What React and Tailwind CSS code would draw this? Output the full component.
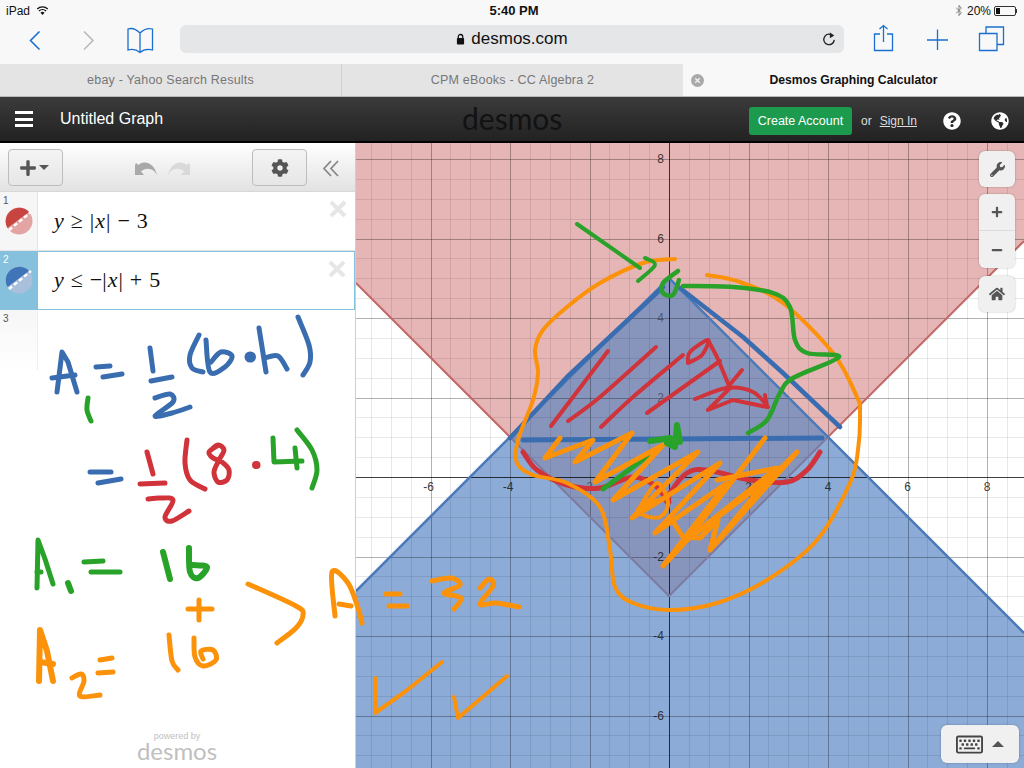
import { FaCog, FaGlobeAmericas, FaHome, FaPlus, FaMinus, FaQuestionCircle, FaRegKeyboard, FaWrench } from "react-icons/fa";

const SANS = "font-['Liberation_Sans',Arial,sans-serif]";

// graph window: origin and pixels per unit
const OX = 669;
const OY = 477;
const UNIT = 39.75;
const px = x => OX + x * UNIT;
const py = y => OY - y * UNIT;
const crisp = v => Math.round(v) + 0.5;

const range = (from, to) => {
  const out = [];
  for (let i = from; i <= to; i++) out.push(i);
  return out;
};

const gridOpacity = i => (i === 0 ? 0.75 : i % 4 === 0 ? 0.3 : 0.09);

function Graph() {
  const xs = range(-16, 18);
  const ys = range(-15, 17);
  return (
    <svg viewBox="356 143 668 625" className="block w-full h-full">
      <rect x="356" y="143" width="668" height="625" fill="#ffffff" />
      {/* shaded regions */}
      <polygon points="356,143 1024,143 1024,241 669,596 356,283" fill="#e6b6b6" />
      <polygon points="669,278 1024,633 1024,768 356,768 356,591" fill="#8cabd7" />
      <polygon points="669,278 828,437 669,596 510,437" fill="#8795bc" />
      {/* grid */}
      {xs.map(i => (
        <line key={`x${i}`} x1={crisp(px(i / 2))} x2={crisp(px(i / 2))} y1="143" y2="768" stroke="#000" strokeOpacity={gridOpacity(i)} strokeWidth="1" />
      ))}
      {ys.map(i => (
        <line key={`y${i}`} y1={crisp(py(i / 2))} y2={crisp(py(i / 2))} x1="356" x2="1024" stroke="#000" strokeOpacity={gridOpacity(i)} strokeWidth="1" />
      ))}
      {/* boundaries; the red one turns grey where it crosses the blue region */}
      <polyline points="356,283 510,437" fill="none" stroke="#c26866" strokeWidth="2" />
      <polyline points="828,437 1024,241" fill="none" stroke="#c26866" strokeWidth="2" />
      <polyline points="510,437 669,596 828,437" fill="none" stroke="#7d7ba0" strokeWidth="2" />
      <polyline points="356,591 669,278 1024,633" fill="none" stroke="#4a7ab8" strokeWidth="2.5" />
      {/* axis numbers */}
      <g fontFamily="'Liberation Sans', Arial, sans-serif" fontSize="12" fill="#222">
        {[-6, -4, -2, 2, 4, 6, 8].map(n => (
          <text key={n} x={px(n) - (n < 0 ? 2 : 0)} y={OY + 14} textAnchor="middle" fillOpacity={n === -2 ? 0.5 : 0.9}>
            {n}
          </text>
        ))}
        {[8, 6, 4, 2, -2, -4, -6].map(n => (
          <text key={n} x={OX - 5} y={py(n) + 4} textAnchor="end" fillOpacity={n === 4 || n === 2 ? 0.55 : 0.9}>
            {n}
          </text>
        ))}
      </g>
    </svg>
  );
}

const BLUE = "#3a6db0";
const RED = "#d1333a";
const GREEN = "#28a228";
const ORANGE = "#fb9209";

// handwriting on top of the page: [colour, width, points, smooth?]
const strokes = [
  // A1 = 1/2 (b.h)
  [BLUE, 5, [[57, 392], [62, 352], [68, 362], [77, 392]]],
  [BLUE, 5, [[52, 378], [75, 375]]],
  [BLUE, 5, [[96, 367], [110, 366]]],
  [BLUE, 5, [[103, 377], [122, 374]]],
  [BLUE, 5, [[150, 348], [153, 371]]],
  [BLUE, 5, [[151, 381], [172, 377]]],
  [BLUE, 5, [[155, 398], [170, 394], [173, 402], [155, 416], [172, 413], [190, 407]], true],
  [BLUE, 5, [[199, 335], [190, 355], [192, 368], [203, 372]], true],
  [BLUE, 5, [[206, 340], [210, 372], [225, 367], [232, 356], [221, 352], [211, 362]], true],
  [BLUE, 11, [[250, 357], [250.5, 357]]],
  [BLUE, 5, [[259, 328], [266, 372]]],
  [BLUE, 5, [[265, 358], [278, 356], [287, 369]], true],
  [BLUE, 5, [[298, 317], [309, 345], [310, 362], [303, 375]], true],
  [GREEN, 5, [[88, 398], [87, 410], [91, 421]], true],
  // = 1/2 (8.4)
  [BLUE, 5, [[90, 472], [111, 472]]],
  [BLUE, 5, [[98, 483], [121, 479]]],
  [RED, 5, [[147, 452], [153, 474]]],
  [RED, 5, [[140, 484], [165, 483]]],
  [RED, 5, [[148, 499], [160, 498], [173, 500], [165, 517], [172, 521], [189, 511]], true],
  [RED, 5, [[187, 440], [185, 463], [190, 480], [205, 489]], true],
  [RED, 5, [[217, 446], [209, 452], [213, 458], [222, 462], [229, 470], [227, 480], [218, 482], [214, 472], [219, 460], [224, 450], [218, 445], [211, 450]], true],
  [RED, 8, [[256, 465], [256.5, 465]]],
  [GREEN, 5, [[273, 438], [274, 462], [302, 461]]],
  [GREEN, 5, [[295, 448], [297, 468]]],
  [GREEN, 5, [[297, 430], [312, 450], [317, 470], [312, 488]], true],
  // A1 = 16
  [GREEN, 5, [[37, 588], [38, 540], [45, 559], [53, 584]]],
  [GREEN, 5, [[37, 572], [41, 572]]],
  [GREEN, 6, [[68, 583], [71, 591]]],
  [GREEN, 5, [[84, 562], [103, 561]]],
  [GREEN, 5, [[91, 572], [120, 572]]],
  [GREEN, 6, [[163, 552], [170, 579]]],
  [GREEN, 6, [[189, 548], [190, 572], [198, 578], [207, 567], [193, 565]], true],
  // + / A2 = 16
  [ORANGE, 5, [[188, 609], [212, 609]]],
  [ORANGE, 5, [[199, 600], [199, 620]]],
  [ORANGE, 6, [[39, 681], [40, 630], [47, 651], [53, 681]]],
  [ORANGE, 6, [[40, 662], [53, 664]]],
  [ORANGE, 5, [[72, 678], [81, 674], [84, 681], [80, 696], [100, 695]], true],
  [ORANGE, 5, [[98, 673], [113, 672]]],
  [ORANGE, 5, [[100, 660], [112, 658]]],
  [ORANGE, 5, [[169, 635], [172, 661], [178, 670]], true],
  [ORANGE, 5, [[194, 638], [195, 657], [203, 666], [216, 660], [213, 650], [201, 651], [203, 659]], true],
  // brace and A = 32
  [ORANGE, 5, [[248, 584], [296, 606], [303, 615], [296, 628], [277, 643]], true],
  [ORANGE, 5, [[335, 616], [332, 572], [348, 583], [358, 608], [362, 623]], true],
  [ORANGE, 5, [[339, 604], [351, 606]]],
  [ORANGE, 5, [[386, 594], [400, 594]]],
  [ORANGE, 5, [[389, 606], [407, 606]]],
  [ORANGE, 5, [[432, 581], [451, 578], [460, 585], [444, 593], [461, 598], [454, 609]], true],
  [ORANGE, 5, [[480, 588], [489, 579], [493, 586], [480, 604], [496, 603], [519, 607]], true],
  // checks
  [ORANGE, 4, [[375, 678], [375, 713], [406, 691], [442, 662]]],
  [ORANGE, 4, [[454, 697], [458, 718], [507, 676]]],
  // tracing the triangle edges
  [BLUE, 4.5, [[510, 438], [567, 377], [663, 287]]],
  [BLUE, 4.5, [[680, 288], [743, 337], [783, 373], [840, 427]]],
  [BLUE, 5, [[523, 440], [667, 439], [822, 438]]],
  // shading, upper triangle
  [RED, 4, [[608, 351], [551, 426]]],
  [RED, 4, [[656, 347], [600, 397], [568, 421]], true],
  [RED, 4, [[683, 355], [633, 397], [601, 427]], true],
  [RED, 4, [[647, 413], [720, 361]]],
  [RED, 4, [[688, 363], [690, 352], [708, 340], [702, 355], [688, 363]], true],
  [RED, 4, [[708, 340], [717, 357], [730, 388], [708, 410], [733, 400], [767, 407], [765, 395]]],
  [RED, 4, [[695, 399], [727, 388], [753, 392], [768, 407]], true],
  [RED, 4, [[727, 388], [742, 370]]],
  // lower curve
  [RED, 5, [[523, 452], [537, 470], [567, 485], [600, 488], [633, 477], [657, 487], [668, 503], [670, 493], [687, 473], [707, 470], [750, 480], [787, 482], [807, 470], [820, 452]], true],
  // scribble, lower triangle
  [GREEN, 5, [[603, 489], [660, 447]]],
  [ORANGE, 5, [[560, 438], [545, 458], [593, 440], [575, 462], [632, 433], [595, 482], [663, 445], [613, 500], [698, 452], [632, 518], [720, 463], [655, 533], [727, 483], [663, 566], [687, 540], [765, 438]]],
  [ORANGE, 5, [[717, 480], [777, 468], [687, 540], [767, 480], [710, 550], [797, 452], [767, 482], [710, 550], [718, 520], [700, 538], [683, 537], [670, 517]]],
  [ORANGE, 4, [[640, 507], [657, 483], [668, 503], [660, 517], [643, 515], [640, 507], [668, 497]], true],
  // big outline
  [ORANGE, 4, [[675, 259], [643, 263], [600, 283], [567, 307], [543, 330], [535, 350], [538, 373], [533, 400], [518, 440], [517, 463], [533, 475], [567, 483], [600, 507], [610, 550], [615, 587], [633, 603], [670, 610], [717, 603], [767, 580], [817, 540], [850, 483], [858, 450], [860, 413], [857, 397], [833, 353], [783, 303], [740, 282], [707, 275]], true],
  // arrows and markers
  [GREEN, 4, [[577, 224], [640, 268]]],
  [GREEN, 4, [[645, 258], [655, 265], [638, 281]], true],
  [GREEN, 4.5, [[678, 271], [663, 283], [663, 293], [673, 295], [679, 280]], true],
  [GREEN, 4.5, [[683, 286], [733, 287], [773, 293], [790, 307], [795, 340], [807, 353], [839, 357], [793, 378], [780, 393], [767, 420], [748, 433]], true],
  [GREEN, 6, [[650, 441], [670, 438], [680, 442], [677, 425], [675, 447], [667, 443]]],
];

// Catmull-Rom through the points, so the pen lines stay round
const smoothPath = pts => {
  let d = `M${pts[0][0]},${pts[0][1]}`;
  for (let i = 0; i < pts.length - 1; i++) {
    const p0 = pts[i - 1] || pts[i];
    const p1 = pts[i];
    const p2 = pts[i + 1];
    const p3 = pts[i + 2] || p2;
    const c1 = [p1[0] + (p2[0] - p0[0]) / 6, p1[1] + (p2[1] - p0[1]) / 6];
    const c2 = [p2[0] - (p3[0] - p1[0]) / 6, p2[1] - (p3[1] - p1[1]) / 6];
    d += ` C${c1[0]},${c1[1]} ${c2[0]},${c2[1]} ${p2[0]},${p2[1]}`;
  }
  return d;
};

const linePath = pts => "M" + pts.map(p => p.join(",")).join(" L");

function Ink() {
  return (
    <svg viewBox="0 0 1024 768" className="absolute inset-0 w-[1024px] h-[768px] pointer-events-none">
      {strokes.map(([color, width, pts, smooth], i) => (
        <path
          key={i}
          d={smooth ? smoothPath(pts) : linePath(pts)}
          fill="none"
          stroke={color}
          strokeWidth={width}
          strokeLinecap="round"
          strokeLinejoin="round"
        />
      ))}
    </svg>
  );
}

function ExprIcon({ dark, light }) {
  return (
    <svg viewBox="0 0 28 28" className="w-7 h-7">
      <circle cx="14" cy="14" r="13.5" fill={light} />
      <path d="M2.5 21 A13.5 13.5 0 0 1 24 5 Z" fill={dark} />
      <line x1="4" y1="23" x2="26" y2="5" stroke="#fff" strokeWidth="2.5" strokeDasharray="4 2.5" />
    </svg>
  );
}

function Expression({ n, active, dark, light, children }) {
  return (
    <div className={`flex h-[59px] ${active ? "border border-[#85c1dc] bg-white" : "border-b border-[#e4e4e4] bg-white"}`}>
      <div className={`relative w-[38px] shrink-0 ${active ? "bg-[#85c1dc] -my-px -ml-px" : "bg-[#f6f6f6] border-r border-[#e4e4e4]"}`}>
        <span className={`absolute left-[3px] top-[3px] text-[10px] leading-3 ${active ? "text-white" : "text-[#555]"}`}>{n}</span>
        <span className="absolute left-[5px] top-[15px] flex">
          <ExprIcon dark={dark} light={light} />
        </span>
      </div>
      <div className="flex-1 flex items-center pl-4 pb-[2px] font-['Liberation_Serif',serif] text-[22px] text-[#111] whitespace-pre [word-spacing:1.5px]">
        {children}
      </div>
      <div className="relative w-[28px]">
        <svg viewBox="0 0 18 18" className="absolute right-[8px] top-[8px] w-[18px] h-[18px]">
          <path d="M2 2 L16 16 M16 2 L2 16" stroke="#e6e6e6" strokeWidth="4" />
        </svg>
      </div>
    </div>
  );
}

function BrowserChrome() {
  return (
    <div className={`${SANS} bg-[#f8f8f8] shrink-0`}>
      {/* status bar */}
      <div className="h-[21px] grid grid-cols-[1fr_auto_1fr] items-center px-[6px] text-[12px] text-[#111]">
        <div className="flex items-center gap-[6px]">
          <span>iPad</span>
          <svg viewBox="0 0 16 12" className="w-[13px] h-[10px]">
            <path d="M8 11 L5.5 8 A4 4 0 0 1 10.5 8 Z" fill="#111" />
            <path d="M3.6 6 A6.5 6.5 0 0 1 12.4 6 M1.5 3.6 A9.5 9.5 0 0 1 14.5 3.6" fill="none" stroke="#111" strokeWidth="1.6" />
          </svg>
        </div>
        <span className="ml-[4px] text-[13px] font-bold">5:40 PM</span>
        <div className="flex items-center justify-end gap-[6px] pr-[1px]">
          <svg viewBox="0 0 8 14" className="w-[8px] h-[13px]">
            <path d="M1 4 L6.5 9.5 L4 12.5 L4 1.5 L6.5 4.5 L1 10" fill="none" stroke="#777" strokeWidth="1" />
          </svg>
          <span className="-ml-[2px]">20%</span>
          <div className="-ml-[3px] flex items-center">
            <div className="w-[22px] h-[10px] border border-[#333] rounded-[2px] p-px">
              <div className="w-[4px] h-full bg-[#111]" />
            </div>
            <div className="w-px h-[4px] bg-[#333]" />
          </div>
        </div>
      </div>
      {/* toolbar */}
      <div className="relative h-[43px]">
        <svg viewBox="0 0 1024 43" className="absolute inset-0 w-full h-full" fill="none" strokeWidth="1.3">
          <path d="M39.5 10.5 L30.5 19.5 L39.5 28.5" stroke="#1a6fd0" strokeWidth="1.6" />
          <path d="M84 10.5 L93 19.5 L84 28.5" stroke="#b9b9bb" strokeWidth="1.6" />
          <path d="M140 12 C135 7 131 7 128 8 L128 29 C131 28 136 28 140 31.5 C144 28 149 28 152.5 29 L152.5 8 C149 7 145 7 140 12 Z M140 12 L140 31" stroke="#1a6fd0" />
          <path d="M880 13 L874.5 13 L874.5 29.5 L892.5 29.5 L892.5 13 L887 13 M883.5 21 L883.5 4.5 M879.5 8 L883.5 4.5 L887.5 8" stroke="#1a6fd0" />
          <path d="M937.5 8.5 L937.5 29 M927 19 L948 19" stroke="#1a6fd0" />
          <path d="M986 12.5 L986 6 L1003.5 6 L1003.5 23.5 L997 23.5 M979.5 12.5 L997 12.5 L997 29.5 L979.5 29.5 Z" stroke="#1a6fd0" />
        </svg>
        <div className="absolute left-[180px] top-[4px] w-[664px] h-[28px] rounded-[6px] bg-[#e5e6e8] flex items-center justify-center text-[17px] text-[#111]">
          <svg viewBox="0 0 10 13" className="w-[9px] h-[12px] mr-[6px]">
            <path d="M2.5 6 V4 A2.5 2.5 0 0 1 7.5 4 V6" fill="none" stroke="#111" strokeWidth="1.4" />
            <rect x="1" y="5.5" width="8" height="7" rx="1" fill="#111" />
          </svg>
          desmos.com
          <svg viewBox="0 0 16 16" className="absolute right-[8px] top-[7px] w-[14px] h-[14px]">
            <path d="M12.5 4.5 A6 6 0 1 0 14 9" fill="none" stroke="#222" strokeWidth="1.5" />
            <path d="M9 0.5 L14 4 L9 7 Z" fill="#222" />
          </svg>
        </div>
      </div>
      {/* tabs */}
      <div className="flex h-[33px] text-[12.5px] border-b border-[#b8b8b8]">
        <div className="w-[342px] bg-[#e4e4e5] border-r border-[#d2d2d2] flex items-center justify-center text-[#777] font-medium tracking-[0.2px]">ebay - Yahoo Search Results</div>
        <div className="w-[341px] bg-[#e4e4e5] flex items-center justify-center text-[#777] font-medium tracking-[0.2px]">CPM eBooks - CC Algebra 2</div>
        <div className="relative flex-1 flex items-center justify-center text-[12.2px] font-bold text-[#111]">
          <svg viewBox="0 0 14 14" className="absolute left-[8px] top-[10px] w-[13px] h-[13px]">
            <circle cx="7" cy="7" r="7" fill="#a9a9ab" />
            <path d="M4.5 4.5 L9.5 9.5 M9.5 4.5 L4.5 9.5" stroke="#f2f2f2" strokeWidth="1.4" />
          </svg>
          Desmos Graphing Calculator
        </div>
      </div>
    </div>
  );
}

function DesmosHeader() {
  return (
    <div className={`${SANS} relative h-[46px] shrink-0 flex items-center bg-gradient-to-b from-[#3b3b3b] to-[#222] border-b-2 border-black text-white`}>
      <div className="ml-[15px] w-[18px] flex flex-col gap-[3.5px]">
        <div className="h-[3px] bg-white" />
        <div className="h-[3px] bg-white" />
        <div className="h-[3px] bg-white" />
      </div>
      <span className="ml-[27px] text-[16px]">Untitled Graph</span>
      <span className="absolute left-[462px] top-[-1px] font-['Lato',sans-serif] font-normal text-[30px] leading-[44px] text-[#121212]">desmos</span>
      <div className="ml-auto pt-[4px] flex items-center">
        <button className="w-[103px] h-[28px] rounded-[3px] bg-[#1c9a4e] text-[12.5px] text-white">Create Account</button>
        <span className="ml-[9px] text-[12px] text-[#ddd]">or</span>
        <span className="ml-[8px] text-[12px] text-[#ddd] underline">Sign In</span>
        <FaQuestionCircle className="ml-[26px] text-[18px] text-white" />
        <FaGlobeAmericas className="ml-[30px] mr-[15px] text-[18px] text-white" />
      </div>
    </div>
  );
}

// curved undo arrow; the redo one is the same shape flipped
function UndoArrow({ className }) {
  return (
    <svg viewBox="0 0 22 16" className={className}>
      <path d="M0 5 L0 15 L9 15 L6 11.5 C10 7.5 16 8 20 12 L22 15 C20 6 14 2 9 2.5 C7 2.8 5 3.5 3.5 5 L1 3 Z" fill="currentColor" />
    </svg>
  );
}

function ExpressionPanel() {
  return (
    <div className={`${SANS} relative w-[356px] shrink-0 bg-white border-r border-[#cfcfcf] flex flex-col`}>
      <div className="relative h-[49px] shrink-0 bg-gradient-to-b from-white to-[#e2e2e2] border-b border-[#d8d8d8]">
        <button className="absolute left-[8px] top-[6px] w-[55px] h-[37px] rounded-[4px] border border-[#bdbdbd] bg-gradient-to-b from-[#f4f4f4] to-[#e6e6e6] flex items-center pl-[10px] text-[#555]">
          <FaPlus className="text-[18px]" />
          <span className="ml-[2px] w-0 h-0 border-x-[5px] border-x-transparent border-t-[5px] border-t-[#555]" />
        </button>
        <UndoArrow className="absolute left-[135px] top-[17px] w-[22px] h-[16px] text-[#a9a9a9]" />
        <UndoArrow className="absolute left-[168px] top-[17px] w-[22px] h-[16px] -scale-x-100 text-[#d9d9d9]" />
        <button className="absolute left-[252px] top-[6px] w-[55px] h-[37px] rounded-[4px] border border-[#bdbdbd] bg-gradient-to-b from-[#f4f4f4] to-[#e6e6e6] flex items-center justify-center text-[#555]">
          <FaCog className="text-[18px]" />
        </button>
        <svg viewBox="0 0 16 17" className="absolute left-[323px] top-[17px] w-[16px] h-[17px]">
          <path d="M8 1 L1 8.5 L8 16 M15 1 L8 8.5 L15 16" fill="none" stroke="#888" strokeWidth="1.8" />
        </svg>
      </div>
      <Expression n="1" dark="#c74440" light="#e3a5a3">
        <i>y</i> ≥ |<i className="px-px">x</i>| − 3
      </Expression>
      <Expression n="2" active dark="#3f74b8" light="#a9bfdc">
        <i>y</i> ≤ −|<i className="px-px">x</i>| + 5
      </Expression>
      <div className="h-[60px] w-[38px] bg-gradient-to-b from-[#f6f6f6] to-white relative border-r border-[#eee]">
        <span className="absolute left-[3px] top-[3px] text-[10px] leading-3 text-[#555]">3</span>
      </div>
      <div className="absolute left-[137px] bottom-[8px] w-[80px] flex flex-col items-center gap-[1px] text-[#c0c0c0]">
        <span className="text-[9px] leading-[10px]">powered by</span>
        <span className="font-['Lato',sans-serif] text-[24px] leading-[18px]">desmos</span>
      </div>
    </div>
  );
}

const toolBtn = "flex items-center justify-center w-[36px] bg-[#f0f0f0] text-[#555]";

function GraphPane() {
  return (
    <div className="relative flex-1 overflow-hidden">
      <Graph />
      <div className={`${toolBtn} absolute left-[623px] top-[8px] h-[36px] rounded-[6px] shadow-[0_0_2px_rgba(0,0,0,0.3)]`}>
        <FaWrench className="text-[15px]" />
      </div>
      <div className="absolute left-[623px] top-[51px] w-[36px] rounded-[6px] overflow-hidden shadow-[0_0_2px_rgba(0,0,0,0.3)]">
        <div className={`${toolBtn} h-[37px] border-b border-[#dcdcdc]`}>
          <FaPlus className="text-[12px]" />
        </div>
        <div className={`${toolBtn} h-[37px]`}>
          <FaMinus className="text-[12px]" />
        </div>
      </div>
      <div className={`${toolBtn} absolute left-[623px] top-[133px] h-[36px] rounded-[6px] shadow-[0_0_2px_rgba(0,0,0,0.3)]`}>
        <FaHome className="text-[16px]" />
      </div>
      <div className="absolute left-[585px] top-[582px] w-[78px] h-[38px] rounded-[6px] bg-[#f0f0f0] flex items-center justify-center gap-[9px] text-[#444] shadow-[0_0_2px_rgba(0,0,0,0.3)]">
        <FaRegKeyboard className="text-[27px]" />
        <span className="w-0 h-0 border-x-[6px] border-x-transparent border-b-[6px] border-b-[#555]" />
      </div>
    </div>
  );
}

export default function App() {
  return (
    <div className="relative w-[1024px] h-[768px] overflow-hidden flex flex-col bg-white">
      <BrowserChrome />
      <DesmosHeader />
      <div className="flex flex-1 min-h-0">
        <ExpressionPanel />
        <GraphPane />
      </div>
      <Ink />
    </div>
  );
}
